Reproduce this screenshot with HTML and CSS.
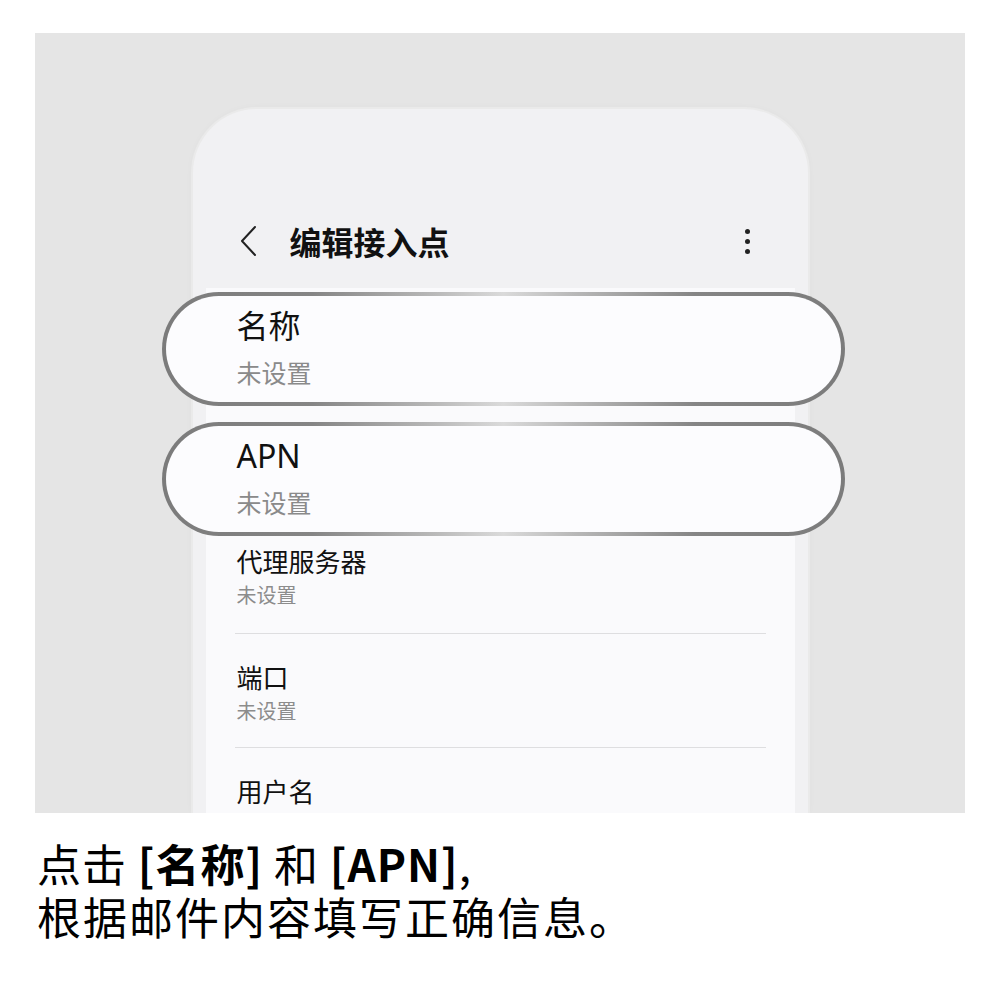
FILE: index.html
```html
<!DOCTYPE html>
<html lang="zh-CN">
<head>
<meta charset="utf-8">
<title>编辑接入点</title>
<link rel="stylesheet" href="styles.css">
</head>
<body>
  <div class="stage">
    <div class="phone">
      <div class="topbar">
        <svg class="back" width="18" height="32" viewBox="0 0 18 32">
          <polyline points="15,2 2,16 15,30" fill="none" stroke="#222" stroke-width="2" stroke-linecap="round" stroke-linejoin="round"/>
        </svg>
        <div class="title">编辑接入点</div>
        <div class="kebab"><span></span><span></span><span></span></div>
      </div>
      <div class="card">
        <div class="pill">
          <div class="pill-title">名称</div>
          <div class="pill-sub">未设置</div>
        </div>
        <div class="pill pill-next">
          <div class="pill-title">APN</div>
          <div class="pill-sub">未设置</div>
        </div>
        <div class="row row-first">
          <div class="row-title">代理服务器</div>
          <div class="row-sub">未设置</div>
        </div>
        <div class="divider"></div>
        <div class="row">
          <div class="row-title">端口</div>
          <div class="row-sub">未设置</div>
        </div>
        <div class="divider"></div>
        <div class="row">
          <div class="row-title">用户名</div>
        </div>
      </div>
    </div>
  </div>
  <div class="caption">
    <div class="caption-line caption-first">点击 <b>[名称]</b> 和 <b>[APN]</b>,</div>
    <div class="caption-line caption-second">根据邮件内容填写正确信息。</div>
  </div>
</body>
</html>
```

FILE: styles.css
```css
* {
  box-sizing: border-box;
}

body {
  margin: 0;
  background: #ffffff;
  font-family: "Noto Sans", "Noto Sans CJK SC", sans-serif;
  color: #111111;
}

.stage {
  margin: 33px 35px 0;
  width: 930px;
  height: 780px;
  background: #e5e5e5;
  overflow: hidden;
  display: flex;
  justify-content: center;
  padding-top: 76px;
}

.phone {
  width: 615px;
  flex: none;
  background: #f1f1f3;
  border-radius: 64px 64px 0 0;
  padding: 0 13px;
  box-shadow: 0 0 0 2px #eaeaea, 0 0 8px rgba(0, 0, 0, 0.04);
}

/* top app bar */
.topbar {
  display: flex;
  align-items: center;
  height: 179px;
  padding: 104px 37px 19px 34px;
}

.back {
  flex: none;
  display: block;
}

.title {
  margin-left: 32px;
  font-family: "Noto Sans CJK SC", sans-serif;
  font-size: 32px;
  font-weight: 700;
  line-height: 56px;
  flex: 1;
}

.kebab {
  width: 20px;
  display: flex;
  flex-direction: column;
  align-items: center;
  gap: 5px;
}

.kebab span {
  width: 5px;
  height: 5px;
  border-radius: 50%;
  background: #222222;
}

/* settings list */
.card {
  background: #fafafc;
  min-height: 600px;
}

.pill {
  margin: 0 -50px 0 -44px;
  padding: 10px 20px 14px 71px;
  height: 114px;
  border: 4px solid transparent;
  border-radius: 60px;
  background:
    linear-gradient(#fcfcfe, #fcfcfe) padding-box,
    linear-gradient(90deg, #7b7b7b 0%, #858585 22%, #b9b9b9 40%, #dadada 50%, #b9b9b9 60%, #858585 78%, #7b7b7b 100%) border-box;
  position: relative;
  top: 4px;
}

.pill-next {
  margin-top: 16px;
}

.pill-title {
  font-size: 32px;
  line-height: 40px;
  color: #111111;
}

.pill-sub {
  margin-top: 10px;
  font-family: "Noto Sans CJK SC", sans-serif;
  font-size: 25px;
  line-height: 32px;
  color: #8a8a8a;
}

.row {
  padding: 26px 0 22px 31px;
}

.row-first {
  padding-top: 12px;
  padding-bottom: 24px;
}

.row-title {
  font-family: "Noto Sans CJK SC", sans-serif;
  font-size: 26px;
  line-height: 34px;
  color: #111111;
}

.row-sub {
  margin-top: 3px;
  font-family: "Noto Sans CJK SC", sans-serif;
  font-size: 20px;
  line-height: 28px;
  color: #8c8c8c;
}

.divider {
  height: 1px;
  margin: 0 29px 0 29px;
  background: #dedee0;
}

/* instruction text below the device */
.caption {
  margin-top: 24px;
  padding-left: 37px;
  font-family: "Noto Sans CJK SC", sans-serif;
  font-size: 44px;
  color: #000000;
}

.caption-line {
  height: 53px;
  line-height: 53px;
  white-space: nowrap;
}

.caption-first {
  letter-spacing: 1px;
}

.caption-second {
  letter-spacing: 2px;
}

.caption b {
  font-weight: 700;
}
```
